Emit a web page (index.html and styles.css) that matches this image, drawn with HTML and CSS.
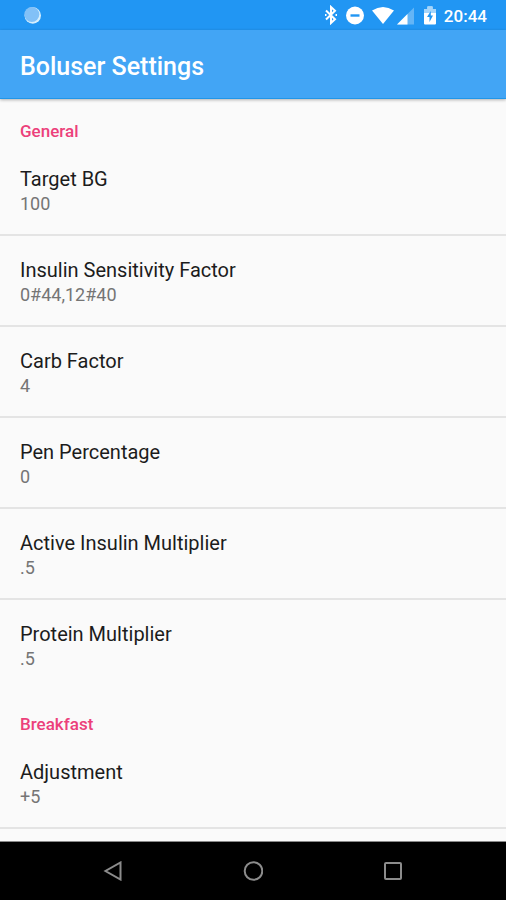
FILE: index.html
```html
<!DOCTYPE html>
<html lang="en">
<head>
    <meta charset="UTF-8">
    <meta name="viewport" content="width=device-width, initial-scale=1.0">
    <title>Boluser Settings</title>
    <link rel="stylesheet" href="styles.css">
</head>
<body>
    <div class="status-bar">
        <svg class="sync" width="20" height="20" viewBox="0 0 20 20">
            <circle cx="10.8" cy="10.5" r="8.2" fill="#d6effd"/>
            <circle cx="9.8" cy="9.5" r="7.5" fill="#82c1f7"/>
        </svg>
        <div class="status-icons">
            <svg width="14" height="20" viewBox="0 0 14 20" fill="none" stroke="#fff" stroke-width="2">
                <path d="M2 5.500L11 14.200L7 18V2L11 5.800L2 14.500"/>
                <path d="M1 10h1.500M11.500 10h1.500"/>
            </svg>
            <svg class="dnd" width="18" height="20" viewBox="0 0 18 20">
                <circle cx="9" cy="10.5" r="9" fill="#fff"/>
                <path d="M4.500 10.500h9" stroke="#2196f3" stroke-width="2.400"/>
            </svg>
            <svg class="wifi" width="22" height="20" viewBox="0 0 22 20">
                <path d="M0 5.500Q11-1.500 22 5.500L11 19z" fill="#fff"/>
            </svg>
            <svg class="signal" width="18" height="20" viewBox="0 0 18 20">
                <path d="M0 19.500L17 2.500V19.500z" fill="#64b5f6"/>
                <path d="M0 19.500L10.500 9V19.500z" fill="#fff"/>
            </svg>
            <svg class="battery" width="12" height="20" viewBox="0 0 12 20">
                <path d="M3.500 1.500h5V4H12V18.500q0 1-1 1H1q-1 0-1-1V4h3.500z" fill="#fff"/>
                <path d="M0 4h3.500V1.500h5V4H12V8H0z" fill="#a6d5fa"/>
                <path d="M6.800 6L3 12h2.500V17L9 10.500H6.800z" fill="#2196f3"/>
            </svg>
            <span class="clock">20:44</span>
        </div>
    </div>
    <header class="app-bar">
        <h1>Boluser Settings</h1>
    </header>
    <main class="settings">
        <section>
            <h2>General</h2>
            <ul>
                <li><span class="name">Target BG</span><span class="value">100</span></li>
                <li><span class="name">Insulin Sensitivity Factor</span><span class="value">0#44,12#40</span></li>
                <li><span class="name">Carb Factor</span><span class="value">4</span></li>
                <li><span class="name">Pen Percentage</span><span class="value">0</span></li>
                <li><span class="name">Active Insulin Multiplier</span><span class="value">.5</span></li>
                <li><span class="name">Protein Multiplier</span><span class="value">.5</span></li>
            </ul>
        </section>
        <section>
            <h2>Breakfast</h2>
            <ul class="more">
                <li><span class="name">Adjustment</span><span class="value">+5</span></li>
            </ul>
        </section>
    </main>
    <nav class="nav-bar">
        <button type="button" aria-label="Back">
            <svg width="20" height="20" viewBox="0 0 20 20"><path d="M17.500 1.500V18.500L2.500 10z"/></svg>
        </button>
        <button type="button" aria-label="Home">
            <svg width="20" height="20" viewBox="0 0 20 20"><circle cx="10.500" cy="10" r="8.800"/></svg>
        </button>
        <button type="button" aria-label="Recent apps">
            <svg width="20" height="20" viewBox="0 0 20 20"><rect x="2" y="2" width="16" height="16" rx="1"/></svg>
        </button>
    </nav>
</body>
</html>
```
FILE: styles.css
```css
* {
    box-sizing: border-box;
}
body {
    font-family: Roboto, sans-serif;
    background-color: #fafafa;
    margin: 0;
    height: 100vh;
    display: flex;
    flex-direction: column;
}
h1, h2, ul {
    margin: 0;
    padding: 0;
}
svg {
    display: block;
}
.status-bar {
    flex: none;
    display: flex;
    justify-content: space-between;
    align-items: center;
    height: 30px;
    padding: 0 19px 0 22px;
    background-color: #2196f3;
}
.status-icons {
    display: flex;
    align-items: center;
}
.dnd {
    margin-left: 8px;
}
.wifi {
    margin-left: 8px;
}
.signal {
    margin-left: 3px;
}
.battery {
    margin-left: 9px;
}
.clock {
    margin-left: 8px;
    color: #fff;
    font-size: 17px;
    font-weight: 500;
    line-height: 20px;
    padding-top: 2px;
}
.app-bar {
    flex: none;
    display: flex;
    align-items: center;
    height: 69px;
    padding: 5px 20px 0;
    background-color: #42a5f5;
    border-bottom: 1px solid #2196e8;
    box-shadow: 0 1px 3px rgba(0, 0, 0, 0.3);
}
h1 {
    color: #fff;
    font-size: 25px;
    font-weight: 500;
    line-height: 30px;
}
.settings {
    flex: 1;
    min-height: 0;
    overflow: hidden;
}
h2 {
    height: 46px;
    padding: 22px 20px 0;
    color: #ec407a;
    font-size: 17px;
    font-weight: 500;
    line-height: 20px;
}
section + section {
    margin-top: 1px;
}
ul {
    list-style: none;
}
li {
    display: flex;
    flex-direction: column;
    height: 91px;
    padding: 22px 20px 0;
}
li:not(:last-child), .more li {
    border-bottom: 2px solid #e4e4e4;
}
.name {
    color: #1c1c1c;
    font-size: 20px;
    line-height: 24px;
}
.value {
    color: #757575;
    font-size: 18px;
    line-height: 26px;
}
.nav-bar {
    flex: none;
    display: flex;
    justify-content: center;
    align-items: center;
    gap: 100px;
    height: 59px;
    background-color: #000;
    border-top: 1px solid #8a8a8a;
}
.nav-bar button {
    display: flex;
    justify-content: center;
    width: 40px;
    padding: 10px;
    border: none;
    background: none;
    cursor: pointer;
}
.nav-bar svg {
    fill: none;
    stroke: #8c8c8c;
    stroke-width: 2;
}
```
